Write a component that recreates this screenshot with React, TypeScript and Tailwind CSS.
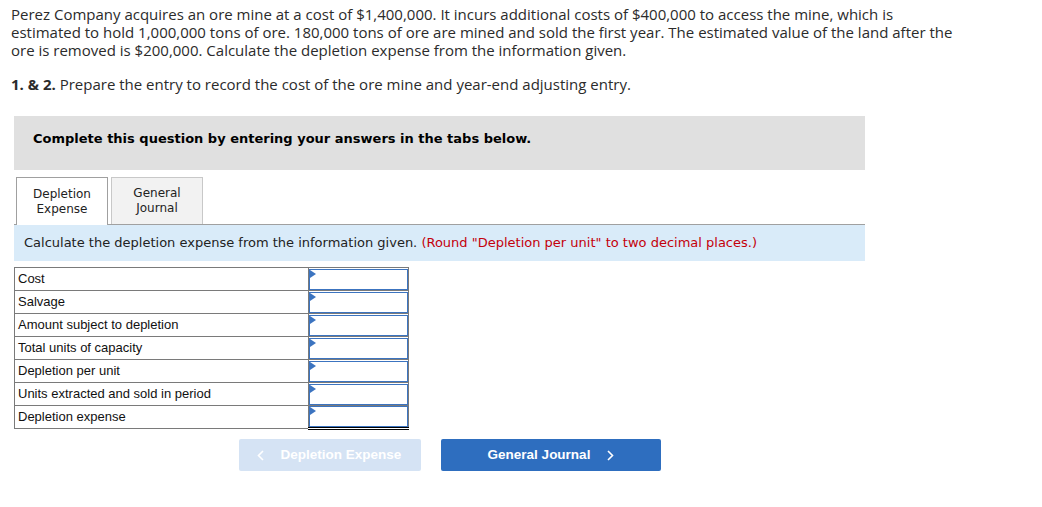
const rows = [
  "Cost",
  "Salvage",
  "Amount subject to depletion",
  "Total units of capacity",
  "Depletion per unit",
  "Units extracted and sold in period",
  "Depletion expense",
]

const InputCell = ({ last }: { last?: boolean }) => {
  return (
    <td className={`border border-[#7a7a7a] p-0 w-[100px] ${last ? "border-b-[3px] border-b-black border-double" : ""}`}>
      <div className="relative h-[21px] border border-[#3c74c0] bg-white">
        <span className="absolute left-0 top-0 w-0 h-0 border-y-[4px] border-y-transparent border-l-[6px] border-l-[#3c74c0]" />
      </div>
    </td>
  )
}

export default function App() {
  return (
    <div className="w-[1042px] h-[507px] bg-white text-[#222]">
      <div className="pl-[11px] pt-[5px] font-['Open_Sans',sans-serif] text-[15px] leading-[18px] text-[#2b2b2b] whitespace-nowrap">
        <p>
          Perez Company acquires an ore mine at a cost of $1,400,000. It incurs additional costs of $400,000 to access the mine, which is<br />
          estimated to hold 1,000,000 tons of ore. 180,000 tons of ore are mined and sold the first year. The estimated value of the land after the<br />
          ore is removed is $200,000. Calculate the depletion expense from the information given.
        </p>
        <p className="mt-[16px]">
          <b className="font-bold">1. &amp; 2.</b> Prepare the entry to record the cost of the ore mine and year-end adjusting entry.
        </p>
      </div>

      <div className="ml-[14px] w-[851px]">
        <div className="mt-[23px] h-[54px] bg-[#e0e0e0] pl-[19px] pt-[13px] font-['DejaVu_Sans',sans-serif] text-[13px] font-bold text-black">
          Complete this question by entering your answers in the tabs below.
        </div>

        <div className="mt-[7px] flex gap-[3px] pl-[2px] font-['DejaVu_Sans',sans-serif] text-[12px] leading-[15px] text-[#222]">
          <div className="w-[92px] h-[48px] border border-b-0 border-[#a0a0a0] bg-white flex items-center justify-center text-center -mb-px relative z-10">
            Depletion<br />Expense
          </div>
          <div className="w-[92px] h-[47px] border border-b-0 border-[#c8c8c8] bg-[#f2f2f2] flex items-center justify-center text-center">
            General<br />Journal
          </div>
        </div>

        <div className="border-t border-[#a0a0a0] bg-[#d9ebf9] h-[37px] flex items-center pl-[10px] font-['DejaVu_Sans',sans-serif] text-[13px] text-[#222]">
          Calculate the depletion expense from the information given.&nbsp;<span className="text-[#c4000b]">(Round "Depletion per unit" to two decimal places.)</span>
        </div>

        <table className="mt-[6px] border-collapse font-['Liberation_Sans',sans-serif] text-[13px] text-[#111]">
          <tbody>
            {rows.map((r, i) => (
              <tr key={r} className="h-[23px]">
                <td className="border border-[#7a7a7a] w-[294px] pl-[3px] py-0 leading-[20px]">{r}</td>
                <InputCell last={i === rows.length - 1} />
              </tr>
            ))}
          </tbody>
        </table>

        <div className="mt-[9px] ml-[225px] flex gap-[20px] font-['Liberation_Sans',sans-serif] text-[13.5px] font-bold">
          <div className="w-[182px] h-[32px] rounded-[2px] bg-[#d5e3f4] text-white flex items-center justify-center gap-[16px] pr-[2px]">
            <svg width="8" height="11" viewBox="0 0 8 11" fill="none" stroke="currentColor" strokeWidth="1.6">
              <polyline points="6,1 1.5,5.5 6,10" />
            </svg>
            <span>Depletion Expense</span>
          </div>
          <div className="w-[220px] h-[32px] rounded-[2px] bg-[#2e6ebf] text-white flex items-center justify-center gap-[16px]">
            <span>General Journal</span>
            <svg width="8" height="11" viewBox="0 0 8 11" fill="none" stroke="currentColor" strokeWidth="1.6">
              <polyline points="2,1 6.5,5.5 2,10" />
            </svg>
          </div>
        </div>
      </div>
    </div>
  )
}
